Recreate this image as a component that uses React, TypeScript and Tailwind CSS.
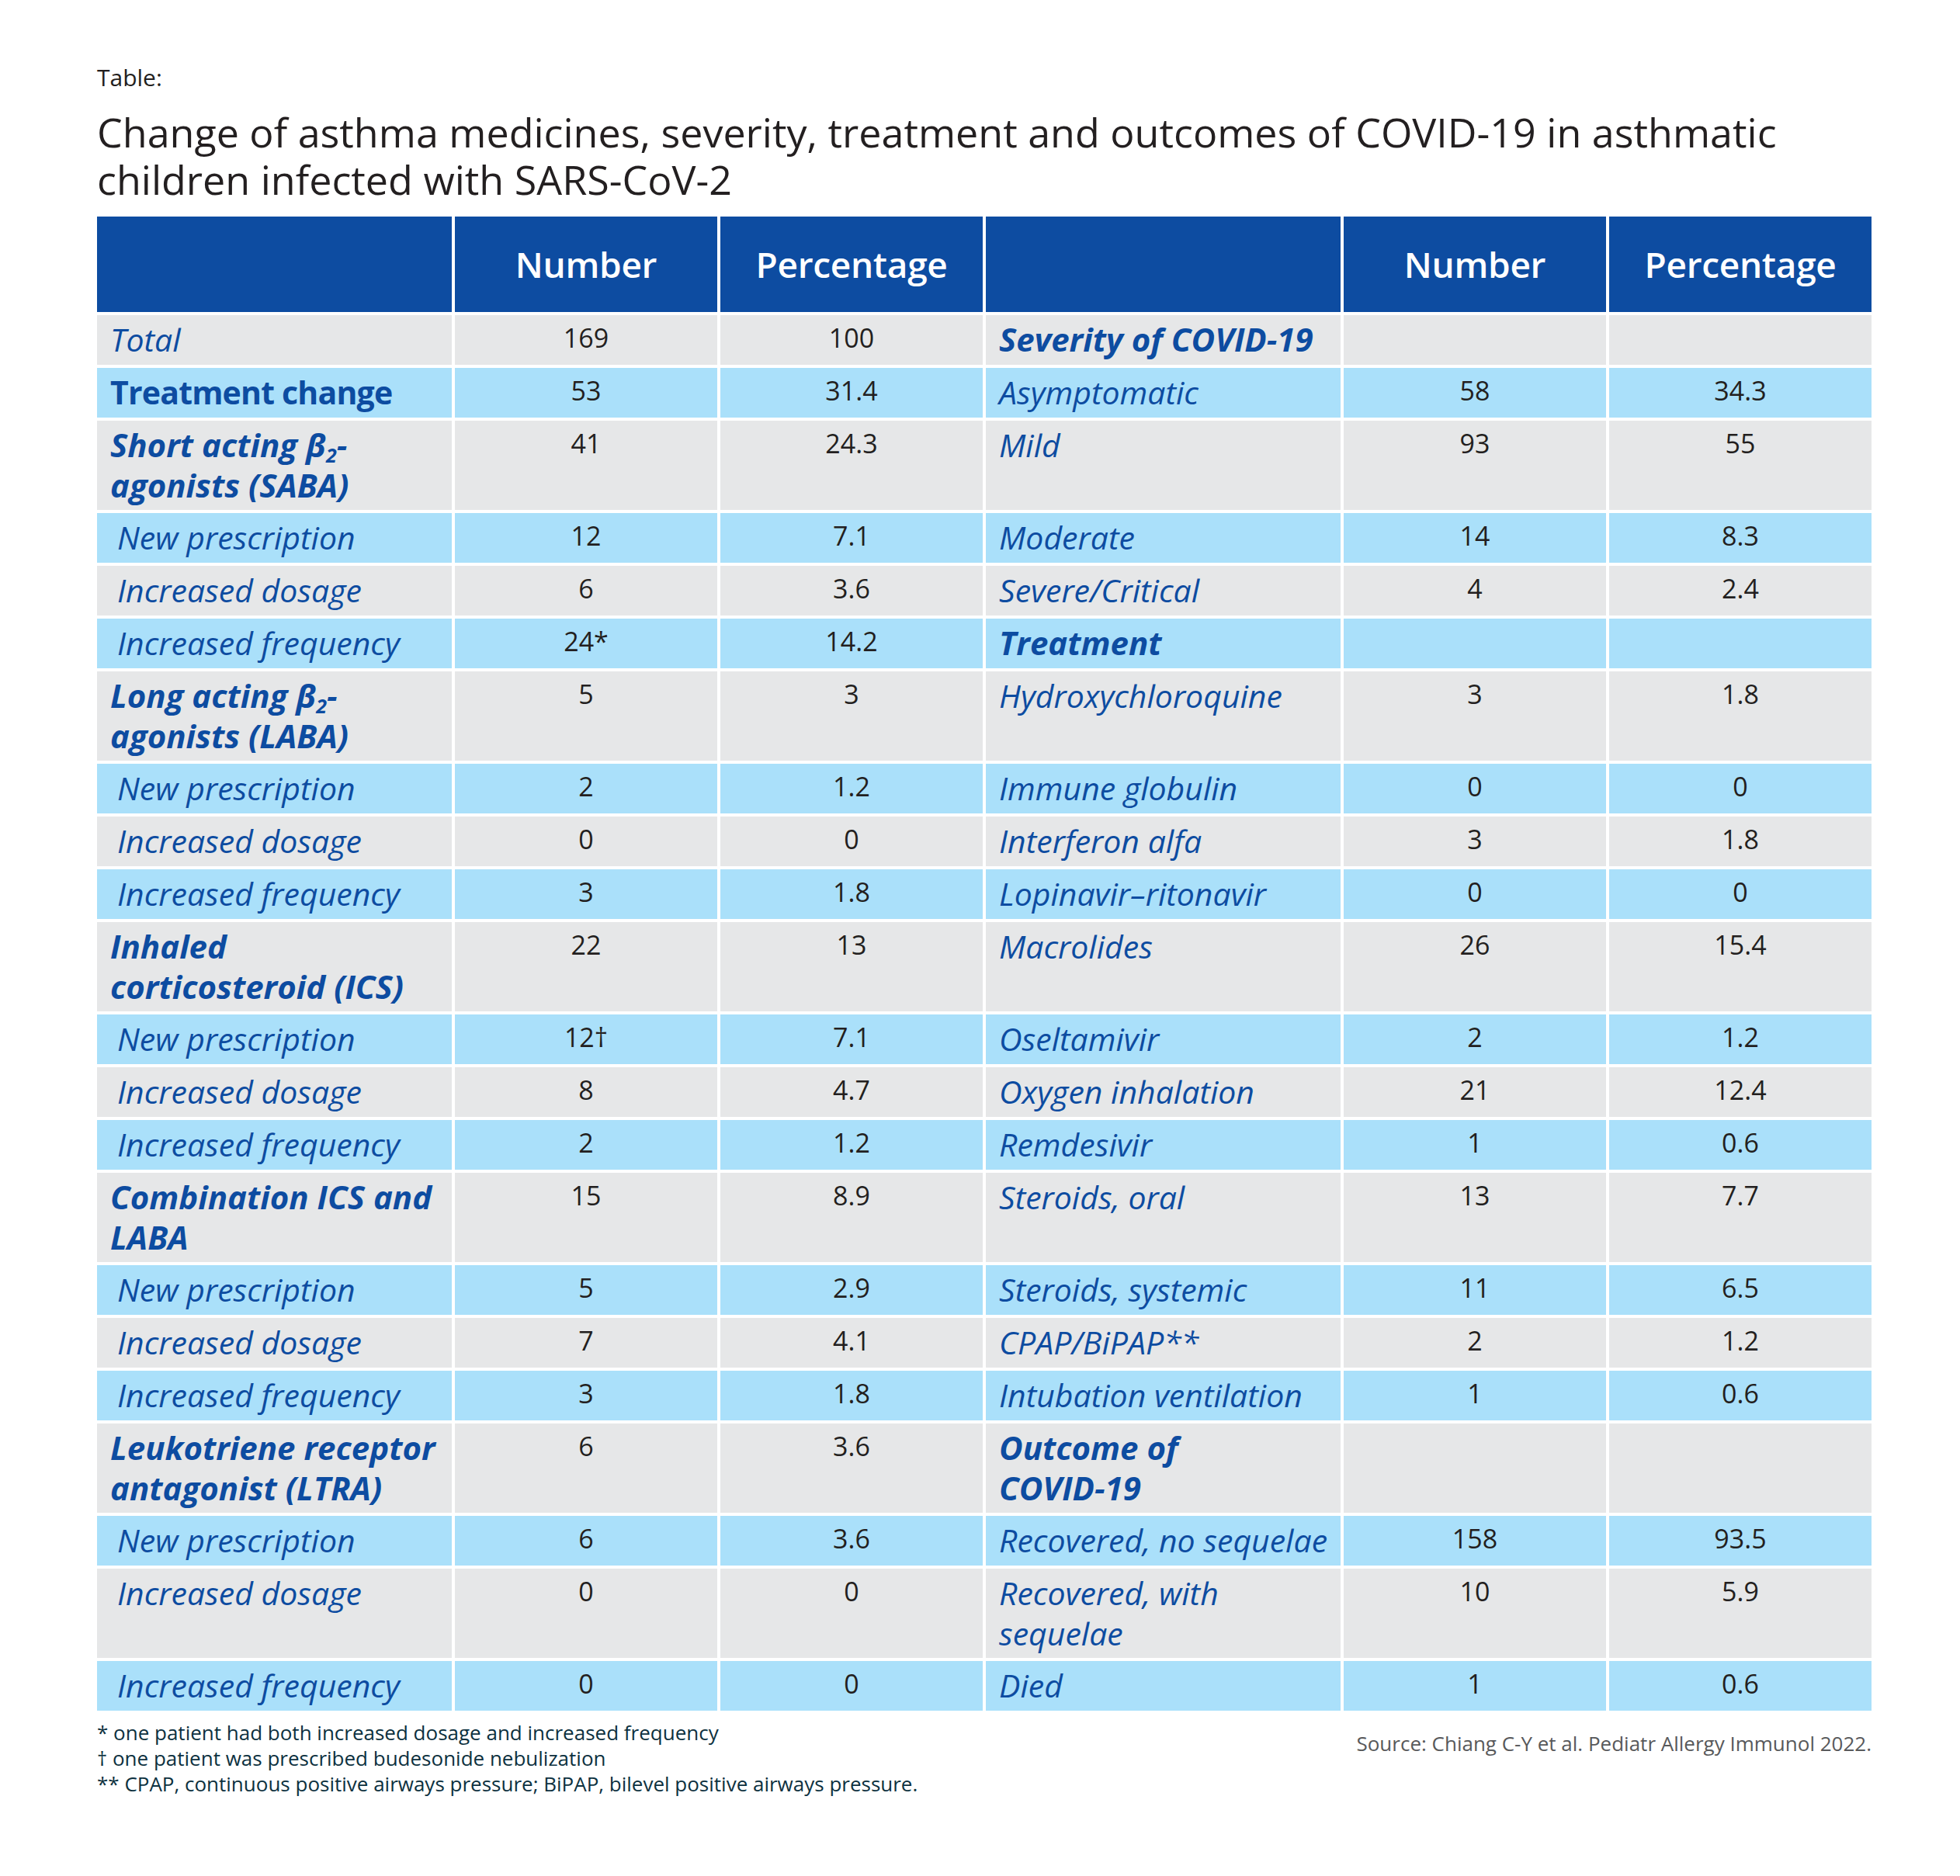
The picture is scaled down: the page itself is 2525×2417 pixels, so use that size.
import React from "react";

type Row = {
  l: React.ReactNode;
  lk: "cat" | "sub" | "bold" | "it";
  n1: string;
  p1: string;
  r: React.ReactNode;
  rk: "cat" | "it";
  n2: string;
  p2: string;
  dbl?: boolean;
};

const Beta = ({ pre }: { pre: string }) => (
  <>
    {pre} β<span className="inline-block text-[25px] leading-[20px] translate-y-[7px]">2</span>-
  </>
);

const rows: Row[] = [
  { l: "Total", lk: "it", n1: "169", p1: "100", r: "Severity of COVID-19", rk: "cat", n2: "", p2: "" },
  { l: "Treatment change", lk: "bold", n1: "53", p1: "31.4", r: "Asymptomatic", rk: "it", n2: "58", p2: "34.3" },
  {
    l: (
      <>
        <Beta pre="Short acting" />
        <br />
        agonists (SABA)
      </>
    ),
    lk: "cat",
    n1: "41",
    p1: "24.3",
    r: "Mild",
    rk: "it",
    n2: "93",
    p2: "55",
    dbl: true,
  },
  { l: "New prescription", lk: "sub", n1: "12", p1: "7.1", r: "Moderate", rk: "it", n2: "14", p2: "8.3" },
  { l: "Increased dosage", lk: "sub", n1: "6", p1: "3.6", r: "Severe/Critical", rk: "it", n2: "4", p2: "2.4" },
  { l: "Increased frequency", lk: "sub", n1: "24*", p1: "14.2", r: "Treatment", rk: "cat", n2: "", p2: "" },
  {
    l: (
      <>
        <Beta pre="Long acting" />
        <br />
        agonists (LABA)
      </>
    ),
    lk: "cat",
    n1: "5",
    p1: "3",
    r: "Hydroxychloroquine",
    rk: "it",
    n2: "3",
    p2: "1.8",
    dbl: true,
  },
  { l: "New prescription", lk: "sub", n1: "2", p1: "1.2", r: "Immune globulin", rk: "it", n2: "0", p2: "0" },
  { l: "Increased dosage", lk: "sub", n1: "0", p1: "0", r: "Interferon alfa", rk: "it", n2: "3", p2: "1.8" },
  { l: "Increased frequency", lk: "sub", n1: "3", p1: "1.8", r: "Lopinavir–ritonavir", rk: "it", n2: "0", p2: "0" },
  {
    l: (
      <>
        Inhaled
        <br />
        corticosteroid (ICS)
      </>
    ),
    lk: "cat",
    n1: "22",
    p1: "13",
    r: "Macrolides",
    rk: "it",
    n2: "26",
    p2: "15.4",
    dbl: true,
  },
  { l: "New prescription", lk: "sub", n1: "12†", p1: "7.1", r: "Oseltamivir", rk: "it", n2: "2", p2: "1.2" },
  { l: "Increased dosage", lk: "sub", n1: "8", p1: "4.7", r: "Oxygen inhalation", rk: "it", n2: "21", p2: "12.4" },
  { l: "Increased frequency", lk: "sub", n1: "2", p1: "1.2", r: "Remdesivir", rk: "it", n2: "1", p2: "0.6" },
  {
    l: (
      <>
        Combination ICS and
        <br />
        LABA
      </>
    ),
    lk: "cat",
    n1: "15",
    p1: "8.9",
    r: "Steroids, oral",
    rk: "it",
    n2: "13",
    p2: "7.7",
    dbl: true,
  },
  { l: "New prescription", lk: "sub", n1: "5", p1: "2.9", r: "Steroids, systemic", rk: "it", n2: "11", p2: "6.5" },
  { l: "Increased dosage", lk: "sub", n1: "7", p1: "4.1", r: "CPAP/BiPAP**", rk: "it", n2: "2", p2: "1.2" },
  { l: "Increased frequency", lk: "sub", n1: "3", p1: "1.8", r: "Intubation ventilation", rk: "it", n2: "1", p2: "0.6" },
  {
    l: (
      <>
        Leukotriene receptor
        <br />
        antagonist (LTRA)
      </>
    ),
    lk: "cat",
    n1: "6",
    p1: "3.6",
    r: (
      <>
        Outcome of
        <br />
        COVID-19
      </>
    ),
    rk: "cat",
    n2: "",
    p2: "",
    dbl: true,
  },
  { l: "New prescription", lk: "sub", n1: "6", p1: "3.6", r: "Recovered, no sequelae", rk: "it", n2: "158", p2: "93.5" },
  {
    l: "Increased dosage",
    lk: "sub",
    n1: "0",
    p1: "0",
    r: (
      <>
        Recovered, with
        <br />
        sequelae
      </>
    ),
    rk: "it",
    n2: "10",
    p2: "5.9",
    dbl: true,
  },
  { l: "Increased frequency", lk: "sub", n1: "0", p1: "0", r: "Died", rk: "it", n2: "1", p2: "0.6" },
];

function labelClass(k: string) {
  switch (k) {
    case "cat":
      return "pl-[17px] italic font-bold text-[42px]";
    case "bold":
      return "pl-[17px] font-bold text-[41px] tracking-[-0.8px]";
    case "sub":
      return "pl-[26px] italic text-[41px]";
    default:
      return "pl-[17px] italic text-[41px]";
  }
}

const headCell =
  "h-[123px] bg-[#0d4ca1] flex items-center justify-center text-white font-semibold text-[46px] tracking-[-0.3px]";

export default function App() {
  return (
    <div className="w-[2525px] min-h-[2417px] bg-white font-['Open_Sans',sans-serif] pl-[125px] pt-[82px]">
      <div className="text-[30px] leading-[36px] text-[#231f20]">Table:</div>
      <div className="mt-[21px] text-[52px] leading-[61px] text-[#231f20]">
        <div>Change of asthma medicines, severity, treatment and outcomes of COVID-19 in asthmatic</div>
        <div>children infected with SARS-CoV-2</div>
      </div>
      <div className="mt-[18px] w-[2286px] grid grid-cols-[457px_338px_338px_457px_338px_338px] gap-[4px]">
        <div className="h-[123px] bg-[#0d4ca1]" />
        <div className={headCell}>Number</div>
        <div className={headCell}>Percentage</div>
        <div className="h-[123px] bg-[#0d4ca1]" />
        <div className={headCell}>Number</div>
        <div className={headCell}>Percentage</div>
        {rows.map((r, i) => {
          const bg = i % 2 === 0 ? "bg-[#e6e7e8]" : "bg-[#aae0fa]";
          const h = r.dbl ? "h-[115px]" : "h-[64px]";
          const lab = `${bg} ${h} pt-[5px] leading-[52px] text-[#0d4ca1]`;
          const num = `${bg} ${h} pt-[9px] text-center text-[34px] leading-[40px] text-[#231f20]`;
          return (
            <React.Fragment key={i}>
              <div className={`${lab} ${labelClass(r.lk)}`}>{r.l}</div>
              <div className={num}>{r.n1}</div>
              <div className={num}>{r.p1}</div>
              <div className={`${lab} ${labelClass(r.rk)}`}>{r.r}</div>
              <div className={num}>{r.n2}</div>
              <div className={num}>{r.p2}</div>
            </React.Fragment>
          );
        })}
      </div>
      <div className="w-[2286px] flex justify-between mt-[12px]">
        <div className="text-[26px] leading-[33px] text-[#0d3140]">
          <div>* one patient had both increased dosage and increased frequency</div>
          <div>† one patient was prescribed budesonide nebulization</div>
          <div>** CPAP, continuous positive airways pressure; BiPAP, bilevel positive airways pressure.</div>
        </div>
        <div className="text-[26px] leading-[33px] text-[#58595b] pt-[14px]">
          Source: Chiang C-Y et al. Pediatr Allergy Immunol 2022.
        </div>
      </div>
    </div>
  );
}
